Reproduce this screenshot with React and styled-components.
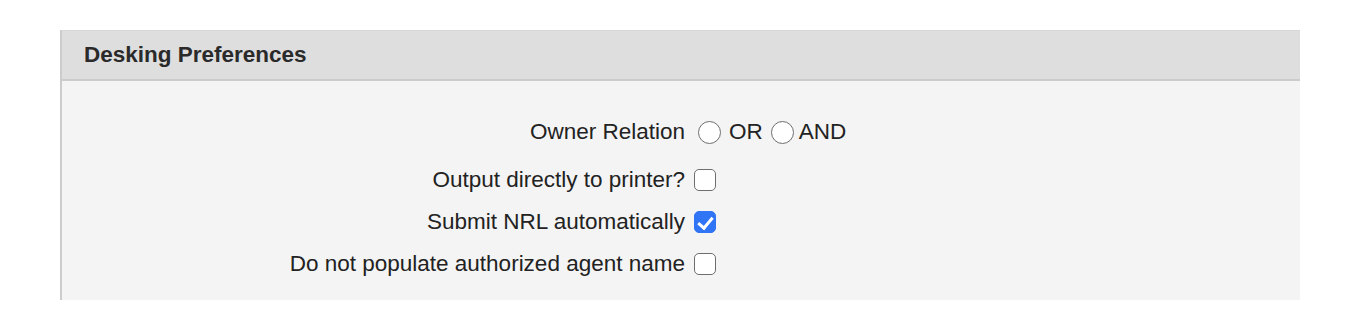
import React, { useState } from "react";
import styled, { createGlobalStyle } from "styled-components";

const GlobalStyle = createGlobalStyle`
  body {
    margin: 0;
    background: #ffffff;
    font-family: "Liberation Sans", Arial, Helvetica, sans-serif;
    color: #222;
  }
`;

const Page = styled.div`
  padding: 30px 60px 0 60px;
`;

const Panel = styled.section`
  background: #f4f4f4;
  border-left: 2px solid #cccccc;
  border-top: 1px solid #d6d6d6;
`;

const PanelHeader = styled.div`
  height: 48px;
  display: flex;
  align-items: center;
  padding-left: 22px;
  background: #dedede;
  border-bottom: 2px solid #cbcbcb;
  font-size: 22.5px;
  font-weight: bold;
  color: #2a2a2a;
`;

const PanelBody = styled.div`
  height: 219px;
  padding: 30px 0 0 14px;
  box-sizing: border-box;
`;

const Grid = styled.div`
  display: grid;
  grid-template-columns: 1fr 1fr;
  column-gap: 6px;
  row-gap: ${(p) => p.$gap || 0}px;
  margin-top: ${(p) => p.$top || 0}px;
`;

const Label = styled.label`
  text-align: right;
  font-size: 22.5px;
  line-height: 26px;
  color: #222;
  padding: 8px 0;
`;

const Control = styled.div`
  display: flex;
  align-items: center;
  gap: 8px;
  font-size: 22.5px;
  color: #222;
`;

const Radio = styled.input.attrs({ type: "radio" })`
  appearance: none;
  width: 23px;
  height: 23px;
  margin: 0 0 0 ${(p) => p.$left || 0}px;
  border: 1.5px solid #6e6e6e;
  border-radius: 50%;
  background: #ffffff;
  box-sizing: border-box;
  &:checked {
    border: 6px solid #2f75f6;
  }
`;

const RadioText = styled.span`
  margin-left: -${(p) => p.$pull || 0}px;
`;

const Check = styled.input.attrs({ type: "checkbox" })`
  appearance: none;
  position: relative;
  width: 22px;
  height: 22px;
  margin: 0 0 0 3px;
  border: 1.5px solid #6e6e6e;
  border-radius: 5px;
  background: #ffffff;
  box-sizing: border-box;
  &:checked {
    background: #2f75f6;
    border-color: #2f75f6;
  }
  &:checked::after {
    content: "";
    position: absolute;
    left: 6px;
    top: 1.5px;
    width: 6px;
    height: 12px;
    border: solid #ffffff;
    border-width: 0 3px 3px 0;
    transform: rotate(40deg);
  }
`;

export default function App() {
  const [relation, setRelation] = useState("");
  const [prefs, setPrefs] = useState({
    printer: false,
    nrl: true,
    agent: false,
  });

  const toggle = (key) => setPrefs({ ...prefs, [key]: !prefs[key] });

  return (
    <Page>
      <GlobalStyle />
      <Panel>
        <PanelHeader>Desking Preferences</PanelHeader>
        <PanelBody>
          <Grid>
            <Label>Owner Relation</Label>
            <Control>
              <Radio
                name="relation"
                $left={7}
                checked={relation === "OR"}
                onChange={() => setRelation("OR")}
              />
              <RadioText>OR</RadioText>
              <Radio
                name="relation"
                checked={relation === "AND"}
                onChange={() => setRelation("AND")}
              />
              <RadioText $pull={3}>AND</RadioText>
            </Control>
          </Grid>
          <Grid $top={6} $gap={-2}>
            <Label>Output directly to printer?</Label>
            <Control>
              <Check checked={prefs.printer} onChange={() => toggle("printer")} />
            </Control>
            <Label>Submit NRL automatically</Label>
            <Control>
              <Check checked={prefs.nrl} onChange={() => toggle("nrl")} />
            </Control>
            <Label>Do not populate authorized agent name</Label>
            <Control>
              <Check checked={prefs.agent} onChange={() => toggle("agent")} />
            </Control>
          </Grid>
        </PanelBody>
      </Panel>
    </Page>
  );
}
